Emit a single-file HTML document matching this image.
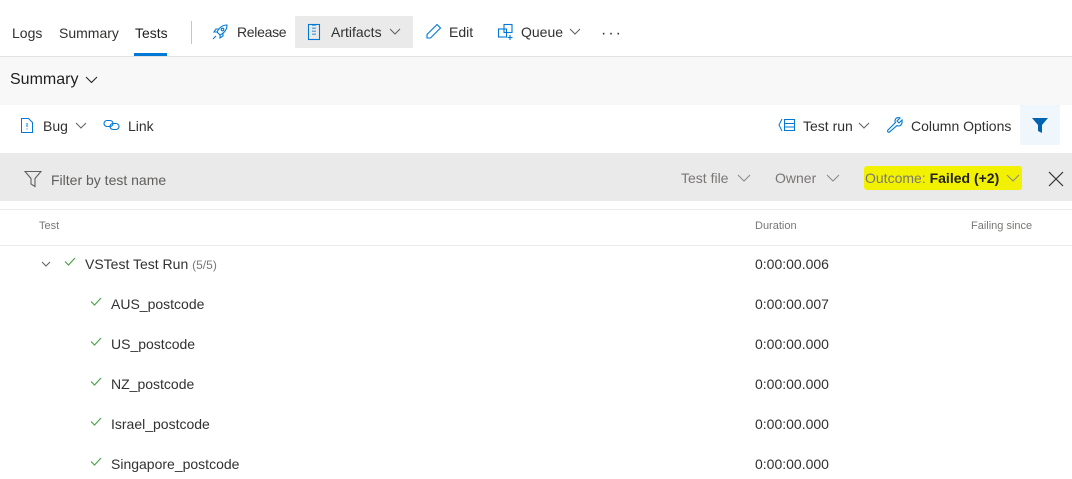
<!DOCTYPE html>
<html><head><style>
*{margin:0;padding:0;box-sizing:border-box}
body{width:1072px;height:479px;overflow:hidden;background:#fff;font-family:"Liberation Sans",sans-serif;color:#323130;position:relative;font-size:14px}
.a{position:absolute;white-space:nowrap}
svg{position:absolute}
.chk{stroke:#4ba34b;stroke-width:1.2;fill:none}
.chev{stroke:#605e5c;stroke-width:1;fill:none}
</style></head><body>
<div class="a" style="left:0;top:56px;width:1072px;height:1px;background:#e1e1e1"></div>
<div class="a" style="left:12px;top:25px">Logs</div>
<div class="a" style="left:59px;top:25px">Summary</div>
<div class="a" style="left:135px;top:25px;color:#201f1e">Tests</div>
<div class="a" style="left:134px;top:53px;width:33px;height:3px;background:#0078d4"></div>
<div class="a" style="left:191px;top:21px;width:1px;height:23px;background:#c8c6c4"></div>
<svg style="left:211px;top:23px" width="18" height="18" viewBox="0 0 18 18" fill="none" stroke="#0078d4" stroke-width="1.1"><path d="M16 2c-5 0-8 3-10 7l3 3c4-2 7-5 7-10zM6 9l-3 0 2-3 3 0M9 12v3l3-2v-3M5 13l-3 3"/><circle cx="11.5" cy="6.5" r="1.3"/></svg>
<div class="a" style="left:237px;top:24px;letter-spacing:-0.3px">Release</div>
<div class="a" style="left:295px;top:16px;width:118px;height:32px;background:#eaeaea"></div>
<svg style="left:307px;top:23px" width="14" height="18" viewBox="0 0 14 18" fill="none" stroke="#0078d4" stroke-width="1.1"><rect x="1.5" y="1.5" width="11" height="15"/><path d="M6 1.5v11M8 1.5v11" stroke-dasharray="1.5 1.5"/></svg>
<div class="a" style="left:331px;top:24px">Artifacts</div>
<svg style="left:389px;top:28px" width="12" height="7"><path class="chev" d="M1 1l5 5 5-5"/></svg>
<svg style="left:425px;top:23px" width="17" height="17" viewBox="0 0 17 17" fill="none" stroke="#0078d4" stroke-width="1.1"><path d="M12 1.5l3.5 3.5-10 10H2v-3.5z"/></svg>
<div class="a" style="left:449px;top:24px">Edit</div>
<svg style="left:497px;top:23px" width="18" height="18" viewBox="0 0 18 18" fill="none" stroke="#0078d4" stroke-width="1.1"><rect x="7" y="1.5" width="8" height="8"/><rect x="1.5" y="6" width="8" height="8"/><path d="M13 12v5M10.5 14.5h5"/></svg>
<div class="a" style="left:521px;top:24px">Queue</div>
<svg style="left:569px;top:28px" width="12" height="7"><path class="chev" d="M1 1l5 5 5-5"/></svg>
<div class="a" style="left:601px;top:25px;font-size:16px;letter-spacing:2px">···</div>
<div class="a" style="left:0;top:57px;width:1072px;height:48px;background:#f8f8f8"></div>
<div class="a" style="left:10px;top:71px;font-size:16px;color:#201f1e">Summary</div>
<svg style="left:85px;top:76px" width="13" height="8"><path stroke="#201f1e" fill="none" d="M1 1l5.5 5.5 5.5-5.5"/></svg>
<svg style="left:20px;top:117px" width="14" height="17" viewBox="0 0 14 17" fill="none" stroke="#0078d4" stroke-width="1"><path d="M1.5 1.5h7l4 4v10h-11z"/><path d="M7 6v4M7 11.5v1"/></svg>
<div class="a" style="left:43px;top:118px">Bug</div>
<svg style="left:75px;top:122px" width="12" height="7"><path class="chev" d="M1 1l5 5 5-5"/></svg>
<svg style="left:103px;top:119px" width="17" height="12" viewBox="0 0 17 12" fill="none" stroke="#0078d4" stroke-width="1.1"><rect x="1" y="1.5" width="9" height="6" rx="3"/><rect x="7" y="4.5" width="9" height="6" rx="3"/></svg>
<div class="a" style="left:128px;top:118px">Link</div>
<svg style="left:778px;top:118px" width="18" height="14" viewBox="0 0 18 14" fill="none" stroke="#0078d4" stroke-width="1"><path d="M4 1L1 7l3 6"/><rect x="6.5" y="1.5" width="10" height="11"/><path d="M6.5 5.5h10M6.5 9h10"/></svg>
<div class="a" style="left:803px;top:118px">Test run</div>
<svg style="left:858px;top:122px" width="12" height="7"><path class="chev" d="M1 1l5 5 5-5"/></svg>
<svg style="left:886px;top:116px" width="18" height="18" viewBox="0 0 18 18" fill="none" stroke="#0078d4" stroke-width="1.1"><path d="M16 4l-3 3-2-2 3-3c-2-1-5 0-5 3 0 1 0 1 .5 1.5L2 14c-1 1 0 3 1.5 2L11 9.5c.5.5 1 .5 1.5.5 3 0 4-3 3.5-6z"/></svg>
<div class="a" style="left:911px;top:118px">Column Options</div>
<div class="a" style="left:1020px;top:105px;width:40px;height:40px;background:#eff6fc"></div>
<svg style="left:1032px;top:118px" width="16" height="15" viewBox="0 0 16 15"><path fill="#0063b1" d="M0 0h16l-6 7v8l-4-2V7z"/></svg>
<div class="a" style="left:0;top:153px;width:1072px;height:48px;background:#eaeaea"></div>
<svg style="left:24px;top:170px" width="18" height="18" viewBox="0 0 18 18" fill="none" stroke="#605e5c" stroke-width="1.1"><path d="M1 1.5h16l-6 7v8l-4-2.5V8.5z"/></svg>
<div class="a" style="left:51px;top:172px;color:#605e5c">Filter by test name</div>
<div class="a" style="left:681px;top:170px;color:#797775">Test file</div>
<svg style="left:737px;top:174px" width="14" height="8"><path stroke="#8a8886" fill="none" d="M1 1l6 6 6-6"/></svg>
<div class="a" style="left:775px;top:170px;color:#797775">Owner</div>
<svg style="left:826px;top:174px" width="14" height="8"><path stroke="#8a8886" fill="none" d="M1 1l6 6 6-6"/></svg>
<div class="a" style="left:864px;top:166px;width:158px;height:24px;background:#f2f200;border-radius:3px"></div>
<div class="a" style="left:865px;top:170px;color:#797775">Outcome: <b style="color:#201f1e">Failed (+2)</b></div>
<svg style="left:1006px;top:174px" width="14" height="8"><path stroke="#8a8886" fill="none" d="M1 1l6 6 6-6"/></svg>
<svg style="left:1048px;top:171px" width="16" height="16"><path stroke="#323130" stroke-width="1.2" d="M1 1l14 14M15 1L1 15"/></svg>
<div class="a" style="left:0;top:209px;width:1072px;height:1px;background:#eaeaea"></div>
<div class="a" style="left:39px;top:220px;font-size:11px;color:#797775">Test</div>
<div class="a" style="left:755px;top:220px;font-size:11px;color:#797775">Duration</div>
<div class="a" style="left:971px;top:220px;font-size:11px;color:#797775">Failing since</div>
<div class="a" style="left:0;top:245px;width:1072px;height:1px;background:#eaeaea"></div>
<svg style="left:41px;top:261px" width="10" height="6"><path class="chev" d="M1 1l4 4 4-4"/></svg>
<svg style="left:64px;top:257px" width="12" height="9"><path class="chk" d="M1 4.5l3.5 3.5L11 1"/></svg>
<div class="a" style="left:85px;top:256px">VSTest Test Run <span style="font-size:12px;color:#797775">(5/5)</span></div>
<div class="a" style="left:755px;top:256px">0:00:00.006</div>
<svg style="left:90px;top:297px" width="12" height="9"><path class="chk" d="M1 4.5l3.5 3.5L11 1"/></svg>
<div class="a" style="left:111px;top:296px">AUS_postcode</div><div class="a" style="left:755px;top:296px">0:00:00.007</div>
<svg style="left:90px;top:337px" width="12" height="9"><path class="chk" d="M1 4.5l3.5 3.5L11 1"/></svg>
<div class="a" style="left:111px;top:336px">US_postcode</div><div class="a" style="left:755px;top:336px">0:00:00.000</div>
<svg style="left:90px;top:377px" width="12" height="9"><path class="chk" d="M1 4.5l3.5 3.5L11 1"/></svg>
<div class="a" style="left:111px;top:376px">NZ_postcode</div><div class="a" style="left:755px;top:376px">0:00:00.000</div>
<svg style="left:90px;top:417px" width="12" height="9"><path class="chk" d="M1 4.5l3.5 3.5L11 1"/></svg>
<div class="a" style="left:111px;top:416px">Israel_postcode</div><div class="a" style="left:755px;top:416px">0:00:00.000</div>
<svg style="left:90px;top:457px" width="12" height="9"><path class="chk" d="M1 4.5l3.5 3.5L11 1"/></svg>
<div class="a" style="left:111px;top:456px">Singapore_postcode</div><div class="a" style="left:755px;top:456px">0:00:00.000</div>
</body></html>
